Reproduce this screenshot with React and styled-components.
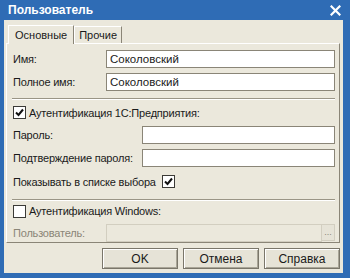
import React, { useState } from "react"
import styled, { createGlobalStyle } from "styled-components"

const Global = createGlobalStyle`
  html, body {
    margin: 0;
    padding: 0;
    background: #2f6cb5;
  }
  * { box-sizing: border-box; }
`

const App = () => {
  const [auth1c, setAuth1c] = useState(true)
  const [show, setShow] = useState(true)
  const [authWin, setAuthWin] = useState(false)

  return (
    <>
      <Global />
      <Window>
        <TitleBar>
          <Title>Пользователь</Title>
          <Close>
            <svg width="11" height="11" viewBox="0 0 11 11">
              <path d="M1.5 1.5 L9.5 9.5 M9.5 1.5 L1.5 9.5" stroke="#fff" strokeWidth="2.2" strokeLinecap="square" />
            </svg>
          </Close>
        </TitleBar>
        <Body>
          <Tabs>
            <Tab active>Основные</Tab>
            <Tab>Прочие</Tab>
          </Tabs>
          <Panel>
            <Row>
              <Label w={94}>Имя:</Label>
              <Input defaultValue="Соколовский" />
            </Row>
            <Row gap={5}>
              <Label w={94}>Полное имя:</Label>
              <Input defaultValue="Соколовский" />
            </Row>
            <Separator top={7} bottom={6} />
            <CheckRow>
              <Check checked={auth1c} onClick={() => setAuth1c(!auth1c)} />
              <CheckText>Аутентификация 1С:Предприятия:</CheckText>
            </CheckRow>
            <Row gap={7}>
              <Label w={130}>Пароль:</Label>
              <Input type="password" />
            </Row>
            <Row gap={5}>
              <Label w={130}>Подтверждение пароля:</Label>
              <Input type="password" />
            </Row>
            <CheckRow gap={8}>
              <CheckText first>Показывать в списке выбора</CheckText>
              <Check checked={show} onClick={() => setShow(!show)} trailing />
            </CheckRow>
            <Separator top={10} bottom={4} />
            <CheckRow>
              <Check checked={authWin} onClick={() => setAuthWin(!authWin)} />
              <CheckText>Аутентификация Windows:</CheckText>
            </CheckRow>
            <Row gap={6}>
              <Label w={94} disabled>Пользователь:</Label>
              <Input disabled />
              <Dots>...</Dots>
            </Row>
          </Panel>
          <Buttons>
            <Button>OK</Button>
            <Button>Отмена</Button>
            <Button>Справка</Button>
          </Buttons>
        </Body>
      </Window>
    </>
  )
}

const Check = ({ checked, ...props }) => (
  <Box {...props}>
    {checked && (
      <svg width="9" height="9" viewBox="0 0 9 9">
        <path d="M1 4.5 L3.5 7 L8 1.5" fill="none" stroke="#111" strokeWidth="2" />
      </svg>
    )}
  </Box>
)

const Window = styled.div`
  width: 350px;
  height: 278px;
  background: #2f6cb5;
  padding: 0 7px 5px 4px;
  display: flex;
  flex-direction: column;
  font-family: "Liberation Sans", Arial, sans-serif;
  font-size: 11px;
  color: #1a1a1a;
`

const TitleBar = styled.div`
  height: 20px;
  display: flex;
  align-items: center;
  justify-content: space-between;
  padding: 0 1px 0 4px;
`

const Title = styled.span`
  color: #fff;
  font-weight: bold;
  font-size: 12px;
`

const Close = styled.div`
  width: 14px;
  height: 14px;
  display: flex;
  align-items: center;
  justify-content: center;
`

const Body = styled.div`
  flex: 1;
  background: #ebe8dc;
  padding: 4px 3px 0 2px;
  display: flex;
  flex-direction: column;
`

const Tabs = styled.div`
  display: flex;
  align-items: flex-end;
  height: 19px;
  padding-left: 2px;
`

const Tab = styled.div`
  height: ${p => (p.active ? "19px" : "17px")};
  padding: 0 ${p => (p.active ? "6px" : "4px")};
  display: flex;
  align-items: center;
  background: #ebe8dc;
  border: 1px solid #fff;
  border-right-color: #8a8577;
  border-bottom: none;
  margin-bottom: ${p => (p.active ? "-1px" : "0")};
  position: relative;
  z-index: ${p => (p.active ? 1 : 0)};
`

const Panel = styled.div`
  height: 200px;
  border: 1px solid #fff;
  border-right-color: #8a8577;
  border-bottom-color: #8a8577;
  padding: 6px 4px 0 5px;
  display: flex;
  flex-direction: column;
`

const Row = styled.div`
  display: flex;
  align-items: center;
  margin-top: ${p => p.gap || 0}px;
`

const Label = styled.span`
  width: ${p => p.w}px;
  flex-shrink: 0;
  padding-left: 1px;
  color: ${p => (p.disabled ? "#8a8577" : "#1a1a1a")};
  white-space: nowrap;
  letter-spacing: -0.2px;
`

const Input = styled.input`
  flex: 1;
  min-width: 0;
  height: 18px;
  border: 1px solid #8a8577;
  background: ${p => (p.disabled ? "#ebe8dc" : "#fff")};
  font: inherit;
  font-size: 11.5px;
  padding: 0 3px;
  color: #1a1a1a;
  outline: none;
  &:disabled {
    border-color: #d2cec0;
  }
`

const Separator = styled.div`
  height: 2px;
  border-top: 1px solid #9a9586;
  border-bottom: 1px solid #fff;
  margin: ${p => p.top}px 0 ${p => p.bottom}px;
`

const CheckRow = styled.div`
  display: flex;
  align-items: center;
  height: 14px;
  margin-top: ${p => p.gap || 0}px;
`

const Box = styled.div`
  width: 13px;
  height: 13px;
  border: 1px solid #3b3a36;
  background: #fff;
  display: flex;
  align-items: center;
  justify-content: center;
  flex-shrink: 0;
  margin-left: ${p => (p.trailing ? "6px" : "1px")};
`

const CheckText = styled.span`
  margin-left: ${p => (p.first ? "1px" : "3px")};
  white-space: nowrap;
  letter-spacing: -0.2px;
`

const Dots = styled.div`
  width: 13px;
  height: 17px;
  display: flex;
  align-items: flex-end;
  justify-content: center;
  padding-bottom: 3px;
  color: #8a8577;
  font-size: 9px;
  border: 1px solid #d2cec0;
  border-left: none;
  background: #e6e3d7;
`

const Buttons = styled.div`
  display: flex;
  justify-content: flex-end;
  gap: 5px;
  padding: 5px 0 0;
`

const Button = styled.button`
  width: 76px;
  height: 21px;
  font: inherit;
  font-size: 12px;
  background: #e6e3d7;
  border: 1px solid #7a766a;
  box-shadow: inset 1px 1px 0 #fff, inset -1px -1px 0 #a9a597;
  color: #1a1a1a;
  padding: 0;
`

export default App
